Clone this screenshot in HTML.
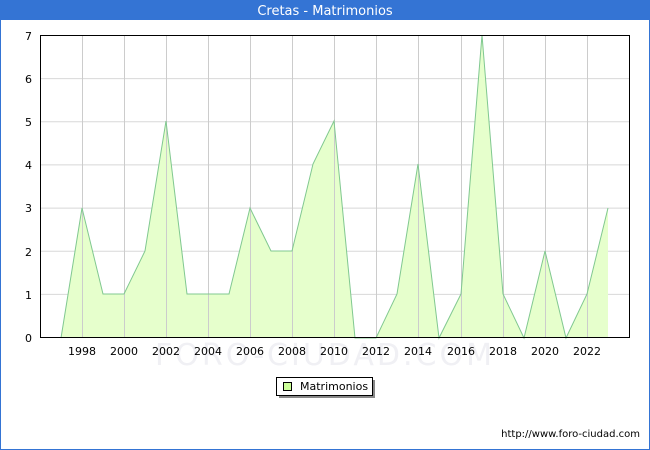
<!DOCTYPE html>
<html><head><meta charset="utf-8"><style>
body{margin:0;width:650px;height:450px;overflow:hidden;background:#fff;font-family:"DejaVu Sans","Liberation Sans",sans-serif;}
</style></head><body>
<svg width="650" height="450" xmlns="http://www.w3.org/2000/svg" style="display:block">
<rect x="0.5" y="0.5" width="649" height="449" fill="#fff" stroke="#3474d4"/>
<rect x="0" y="0" width="650" height="20" fill="#3474d4"/>
<text x="325" y="15" font-size="13" fill="#fff" text-anchor="middle" font-family="DejaVu Sans,sans-serif">Cretas - Matrimonios</text>
<text x="325" y="365" font-size="30" fill="#f0f0f4" text-anchor="middle" font-family="DejaVu Sans,sans-serif" letter-spacing="3">FORO-CIUDAD.COM</text>
<g stroke="#d8d8d8" stroke-width="1">
<line x1="40" y1="294.4" x2="630" y2="294.4"/><line x1="40" y1="251.3" x2="630" y2="251.3"/><line x1="40" y1="208.1" x2="630" y2="208.1"/><line x1="40" y1="164.9" x2="630" y2="164.9"/><line x1="40" y1="121.8" x2="630" y2="121.8"/><line x1="40" y1="78.6" x2="630" y2="78.6"/>
</g>
<polygon fill="#e6ffcc" points="61,338 82,208 103,294 124,294 145,251 166,121 187,294 208,294 229,294 250,208 271,251 292,251 313,164 334,121 355,338"/>
<polygon fill="#e6ffcc" points="376,338 397,294 418,164 439,338 461,294 482,35 503,294 524,338 545,251 566,338 587,294 608,208 608,338"/>
<g stroke="#cccccc" stroke-width="1">
<line x1="82.5" y1="35" x2="82.5" y2="338"/><line x1="124.5" y1="35" x2="124.5" y2="338"/><line x1="166.5" y1="35" x2="166.5" y2="338"/><line x1="208.5" y1="35" x2="208.5" y2="338"/><line x1="250.5" y1="35" x2="250.5" y2="338"/><line x1="292.5" y1="35" x2="292.5" y2="338"/><line x1="334.5" y1="35" x2="334.5" y2="338"/><line x1="376.5" y1="35" x2="376.5" y2="338"/><line x1="418.5" y1="35" x2="418.5" y2="338"/><line x1="461.5" y1="35" x2="461.5" y2="338"/><line x1="503.5" y1="35" x2="503.5" y2="338"/><line x1="545.5" y1="35" x2="545.5" y2="338"/><line x1="587.5" y1="35" x2="587.5" y2="338"/>
</g>
<polyline fill="none" stroke="#80c890" stroke-width="1" points="61,338 82,208 103,294 124,294 145,251 166,121 187,294 208,294 229,294 250,208 271,251 292,251 313,164 334,121 355,338 376,338 397,294 418,164 439,338 461,294 482,35 503,294 524,338 545,251 566,338 587,294 608,208"/>
<rect x="40.5" y="35.5" width="589" height="302" fill="none" stroke="#000"/>
<g font-size="11" fill="#000" font-family="DejaVu Sans,sans-serif">
<g text-anchor="end"><text x="32" y="342">0</text><text x="32" y="299">1</text><text x="32" y="256">2</text><text x="32" y="212">3</text><text x="32" y="169">4</text><text x="32" y="126">5</text><text x="32" y="83">6</text><text x="32" y="40">7</text></g>
<g text-anchor="middle"><text x="82" y="355">1998</text><text x="124" y="355">2000</text><text x="166" y="355">2002</text><text x="208" y="355">2004</text><text x="250" y="355">2006</text><text x="292" y="355">2008</text><text x="334" y="355">2010</text><text x="376" y="355">2012</text><text x="418" y="355">2014</text><text x="461" y="355">2016</text><text x="503" y="355">2018</text><text x="545" y="355">2020</text><text x="587" y="355">2022</text></g>
</g>
<rect x="279" y="380" width="96" height="18" fill="#888"/>
<rect x="276.5" y="377.5" width="96" height="18" fill="#fff" stroke="#000"/>
<rect x="283.5" y="382.5" width="8" height="8" fill="#ccff99" stroke="#000"/>
<text x="300" y="390" font-size="11" font-family="DejaVu Sans,sans-serif">Matrimonios</text>
<text x="640" y="437" font-size="10" text-anchor="end" font-family="DejaVu Sans,sans-serif">http://www.foro-ciudad.com</text>
</svg>
</body></html>
